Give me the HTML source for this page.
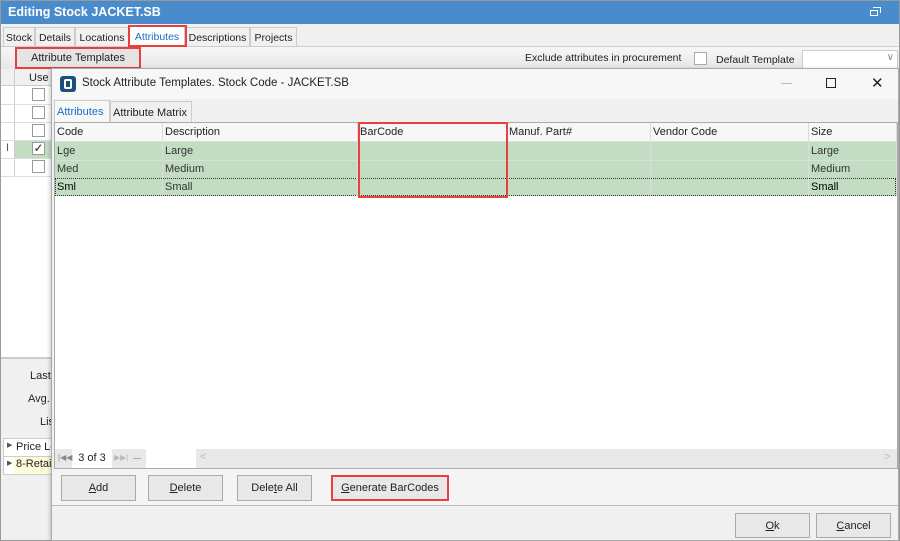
<!DOCTYPE html>
<html><head><meta charset="utf-8"><style>
*{box-sizing:border-box;margin:0;padding:0}
body{width:900px;height:541px;overflow:hidden;background:#f0f0f0;font-family:"Liberation Sans",Tahoma,sans-serif;font-size:11px;color:#222;position:relative}
.a{position:absolute;white-space:nowrap}
.tab{position:absolute;top:27px;height:19px;border:1px solid #ccc;border-bottom:none;background:#f0f0f0;padding:4px 0 0;text-align:center;font-size:10.5px;white-space:nowrap;overflow:hidden}
.btn{position:absolute;height:26px;border:1px solid #aaa;background:#e8e8e8;text-align:center;line-height:24px;font-size:11px}
.red{position:absolute;border:2px solid #e8403f}
.cell{position:absolute;height:18px;line-height:18px;padding-left:2px;border-right:1px solid #dcdcdc;white-space:nowrap}
.cb{position:absolute;width:13px;height:13px;border:1px solid #999;background:#fff}
</style></head><body>
<div class="a" style="left:0;top:0;width:900px;height:541px;border:1px solid #9a9a9a"></div>
<div class="a" style="left:1px;top:1px;width:898px;height:23px;background:#4a8ccb;color:#fff;font-weight:bold;font-size:12.5px;line-height:23px;padding-left:7px">Editing Stock JACKET.SB</div>
<div class="a" style="left:870px;top:10px;width:8px;height:6px;border:1.5px solid #fff"></div>
<div class="a" style="left:873px;top:7px;width:8px;height:6px;border-top:1.5px solid #fff;border-right:1.5px solid #fff"></div>
<div class="a" style="left:1px;top:46px;width:898px;height:1px;background:#ccc"></div>
<div class="tab" style="left:3px;width:32px">Stock</div>
<div class="tab" style="left:35px;width:40px">Details</div>
<div class="tab" style="left:75px;width:54px">Locations</div>
<div class="tab" style="left:129px;width:56px;background:#fff;color:#1a6fc6;top:26px;height:21px">Attributes</div>
<div class="tab" style="left:185px;width:65px">Descriptions</div>
<div class="tab" style="left:250px;width:47px">Projects</div>
<div class="red" style="left:128px;top:25px;width:59px;height:22px"></div>
<div class="a" style="left:1px;top:47px;width:898px;height:22px;background:linear-gradient(#f7f7f7,#e6e6e6)"></div>
<div class="a" style="left:16px;top:48px;width:124px;height:20px;background:#e4e4e4;text-align:center;line-height:20px;font-size:11px">Attribute Templates</div>
<div class="red" style="left:15px;top:47px;width:126px;height:22px"></div>
<div class="a" style="left:525px;top:52px;font-size:10.5px">Exclude attributes in procurement</div>
<div class="cb" style="left:694px;top:52px;border-color:#aaa"></div>
<div class="a" style="left:716px;top:54px;font-size:10.5px">Default Template</div>
<div class="a" style="left:802px;top:50px;width:96px;height:19px;border:1px solid #ccc;background:#fff"><span class="a" style="right:3px;top:1px;color:#888;font-size:10px">&#8744;</span></div>
<!-- left grid -->
<div class="a" style="left:1px;top:69px;width:52px;height:288px;background:#fff;border-right:1px solid #ccc"></div>
<div class="a" style="left:1px;top:69px;width:52px;height:17px;background:#f0f0f0;border-bottom:1px solid #ccc"></div>
<div class="a" style="left:29px;top:72px;font-size:11px">Use</div>
<div class="a" style="left:14px;top:69px;width:1px;height:107px;background:#ccc"></div>
<div class="a" style="left:15px;top:140px;width:38px;height:18px;background:#c2ddc2"></div>
<div class="a" style="left:1px;top:104px;width:52px;height:1px;background:#ddd"></div>
<div class="a" style="left:1px;top:122px;width:52px;height:1px;background:#ddd"></div>
<div class="a" style="left:1px;top:140px;width:52px;height:1px;background:#ddd"></div>
<div class="a" style="left:1px;top:158px;width:52px;height:1px;background:#ddd"></div>
<div class="a" style="left:1px;top:176px;width:52px;height:1px;background:#ddd"></div>
<div class="cb" style="left:32px;top:88px"></div>
<div class="cb" style="left:32px;top:106px"></div>
<div class="cb" style="left:32px;top:124px"></div>
<div class="cb" style="left:32px;top:142px;font-size:12px;line-height:11px;text-align:center">&#10003;</div>
<div class="cb" style="left:32px;top:160px"></div>
<div class="a" style="left:6px;top:142px;font-size:11px;color:#555">I</div>
<div class="a" style="left:1px;top:357px;width:52px;height:2px;background:#ccc"></div>
<div class="a" style="left:30px;top:370px;font-size:11px">Last</div>
<div class="a" style="left:28px;top:393px;font-size:11px">Avg.</div>
<div class="a" style="left:40px;top:416px;font-size:11px">Lis</div>
<div class="a" style="left:3px;top:438px;width:50px;height:37px;background:#fff;border:1px solid #ccc"></div>
<div class="a" style="left:3px;top:456px;width:50px;height:1px;background:#ccc"></div>
<div class="a" style="left:14px;top:457px;width:39px;height:17px;background:#fdfbd8"></div>
<div class="a" style="left:7px;top:441px;font-size:7px;color:#555">&#9654;</div>
<div class="a" style="left:7px;top:459px;font-size:7px;color:#555">&#9654;</div>
<div class="a" style="left:16px;top:441px;font-size:11px">Price Le</div>
<div class="a" style="left:16px;top:458px;font-size:11px">8-Retai</div>
<!-- dialog -->
<div class="a" style="left:51px;top:68px;width:848px;height:473px;background:#f0f0f0;border:1px solid #aaa;box-shadow:-2px 0 3px rgba(0,0,0,.15)"></div>
<div class="a" style="left:52px;top:69px;width:846px;height:30px;background:#f7f7f7"></div>
<div class="a" style="left:60px;top:76px;width:16px;height:16px;background:#1c4f7c;border-radius:3px"></div>
<div class="a" style="left:64px;top:79px;width:8px;height:10px;border:2px solid #fff;border-radius:2px"></div>
<div class="a" style="left:82px;top:77px;font-size:11.5px">Stock Attribute Templates. Stock Code - JACKET.SB</div>
<div class="a" style="left:781px;top:83px;width:11px;height:1px;background:#bbb"></div>
<div class="a" style="left:826px;top:78px;width:10px;height:10px;border:1px solid #222"></div>
<div class="a" style="left:871px;top:74px;font-size:15px">&#x2715;</div>
<div class="a" style="left:54px;top:100px;width:56px;height:22px;background:#f7f7f7;border:1px solid #ccc;border-bottom:none;color:#1a6fc6;padding:5px 2px 0;font-size:11px">Attributes</div>
<div class="a" style="left:110px;top:101px;width:82px;height:21px;border:1px solid #ccc;border-bottom:none;padding:5px 2px 0;font-size:11px">Attribute Matrix</div>
<div class="a" style="left:54px;top:122px;width:844px;height:347px;background:#fff;border:1px solid #aaa"></div>
<div class="a" style="left:55px;top:123px;width:842px;height:19px;background:#f7f7f7;border-bottom:1px solid #ddd"></div>
<div style="font-size:11px">
<div class="cell" style="left:55px;top:123px;width:108px">Code</div>
<div class="cell" style="left:163px;top:123px;width:195px">Description</div>
<div class="cell" style="left:358px;top:123px;width:149px">BarCode</div>
<div class="cell" style="left:507px;top:123px;width:144px">Manuf. Part#</div>
<div class="cell" style="left:651px;top:123px;width:158px">Vendor Code</div>
<div class="cell" style="left:809px;top:123px;width:88px">Size</div>
</div>
<div class="a" style="left:55px;top:142px;width:841px;height:54px;background:#c2ddc2"></div>
<div class="a" style="left:55px;top:160px;width:841px;height:1px;background:#ddd"></div>
<div class="a" style="left:55px;top:178px;width:841px;height:1px;border-top:1px dotted #333"></div>
<div class="a" style="left:55px;top:195px;width:841px;height:1px;border-top:1px dotted #333"></div>
<div class="a" style="left:55px;top:178px;width:1px;height:18px;border-left:1px dotted #333"></div>
<div class="a" style="left:895px;top:178px;width:1px;height:18px;border-left:1px dotted #333"></div>
<div style="font-size:11px;color:#333">
<div class="cell" style="left:55px;top:142px;width:108px">Lge</div>
<div class="cell" style="left:163px;top:142px;width:195px">Large</div>
<div class="cell" style="left:358px;top:142px;width:149px"></div>
<div class="cell" style="left:507px;top:142px;width:144px"></div>
<div class="cell" style="left:651px;top:142px;width:158px"></div>
<div class="cell" style="left:809px;top:142px;width:88px">Large</div>
<div class="cell" style="left:55px;top:160px;width:108px">Med</div>
<div class="cell" style="left:163px;top:160px;width:195px">Medium</div>
<div class="cell" style="left:358px;top:160px;width:149px"></div>
<div class="cell" style="left:507px;top:160px;width:144px"></div>
<div class="cell" style="left:651px;top:160px;width:158px"></div>
<div class="cell" style="left:809px;top:160px;width:88px">Medium</div>
<div class="cell" style="left:55px;top:178px;width:108px;color:#000">Sml</div>
<div class="cell" style="left:163px;top:178px;width:195px">Small</div>
<div class="cell" style="left:358px;top:178px;width:149px"></div>
<div class="cell" style="left:507px;top:178px;width:144px"></div>
<div class="cell" style="left:651px;top:178px;width:158px"></div>
<div class="cell" style="left:809px;top:178px;width:88px;color:#000">Small</div>
</div>
<div class="red" style="left:358px;top:122px;width:150px;height:76px"></div>
<div class="a" style="left:55px;top:449px;width:842px;height:19px;background:#e8e8e8"></div>
<div class="a" style="left:72px;top:449px;width:40px;height:19px;background:#fff;text-align:center;line-height:19px;font-size:11px">3 of 3</div>
<div class="a" style="left:146px;top:449px;width:50px;height:19px;background:#fff"></div>
<div class="a" style="left:58px;top:453px;font-size:8px;color:#888">|&#9664;&#9664;</div>
<div class="a" style="left:114px;top:453px;font-size:8px;color:#bbb">&#9654;&#9654;|</div>
<div class="a" style="left:133px;top:458px;width:8px;height:1px;background:#aaa"></div>
<div class="a" style="left:200px;top:451px;color:#bbb;font-size:11px">&lt;</div>
<div class="a" style="left:884px;top:451px;color:#bbb;font-size:11px">&gt;</div>
<div class="a" style="left:52px;top:469px;width:846px;height:37px;background:#f4f4f4;border-bottom:1px solid #bbb"></div>
<div class="btn" style="left:61px;top:475px;width:75px"><u>A</u>dd</div>
<div class="btn" style="left:148px;top:475px;width:75px"><u>D</u>elete</div>
<div class="btn" style="left:237px;top:475px;width:75px">Dele<u>t</u>e All</div>
<div class="btn" style="left:332px;top:475px;width:116px"><u>G</u>enerate BarCodes</div>
<div class="red" style="left:331px;top:475px;width:118px;height:26px"></div>
<div class="btn" style="left:735px;top:513px;width:75px;height:25px"><u>O</u>k</div>
<div class="btn" style="left:816px;top:513px;width:75px;height:25px"><u>C</u>ancel</div>
</body></html>
